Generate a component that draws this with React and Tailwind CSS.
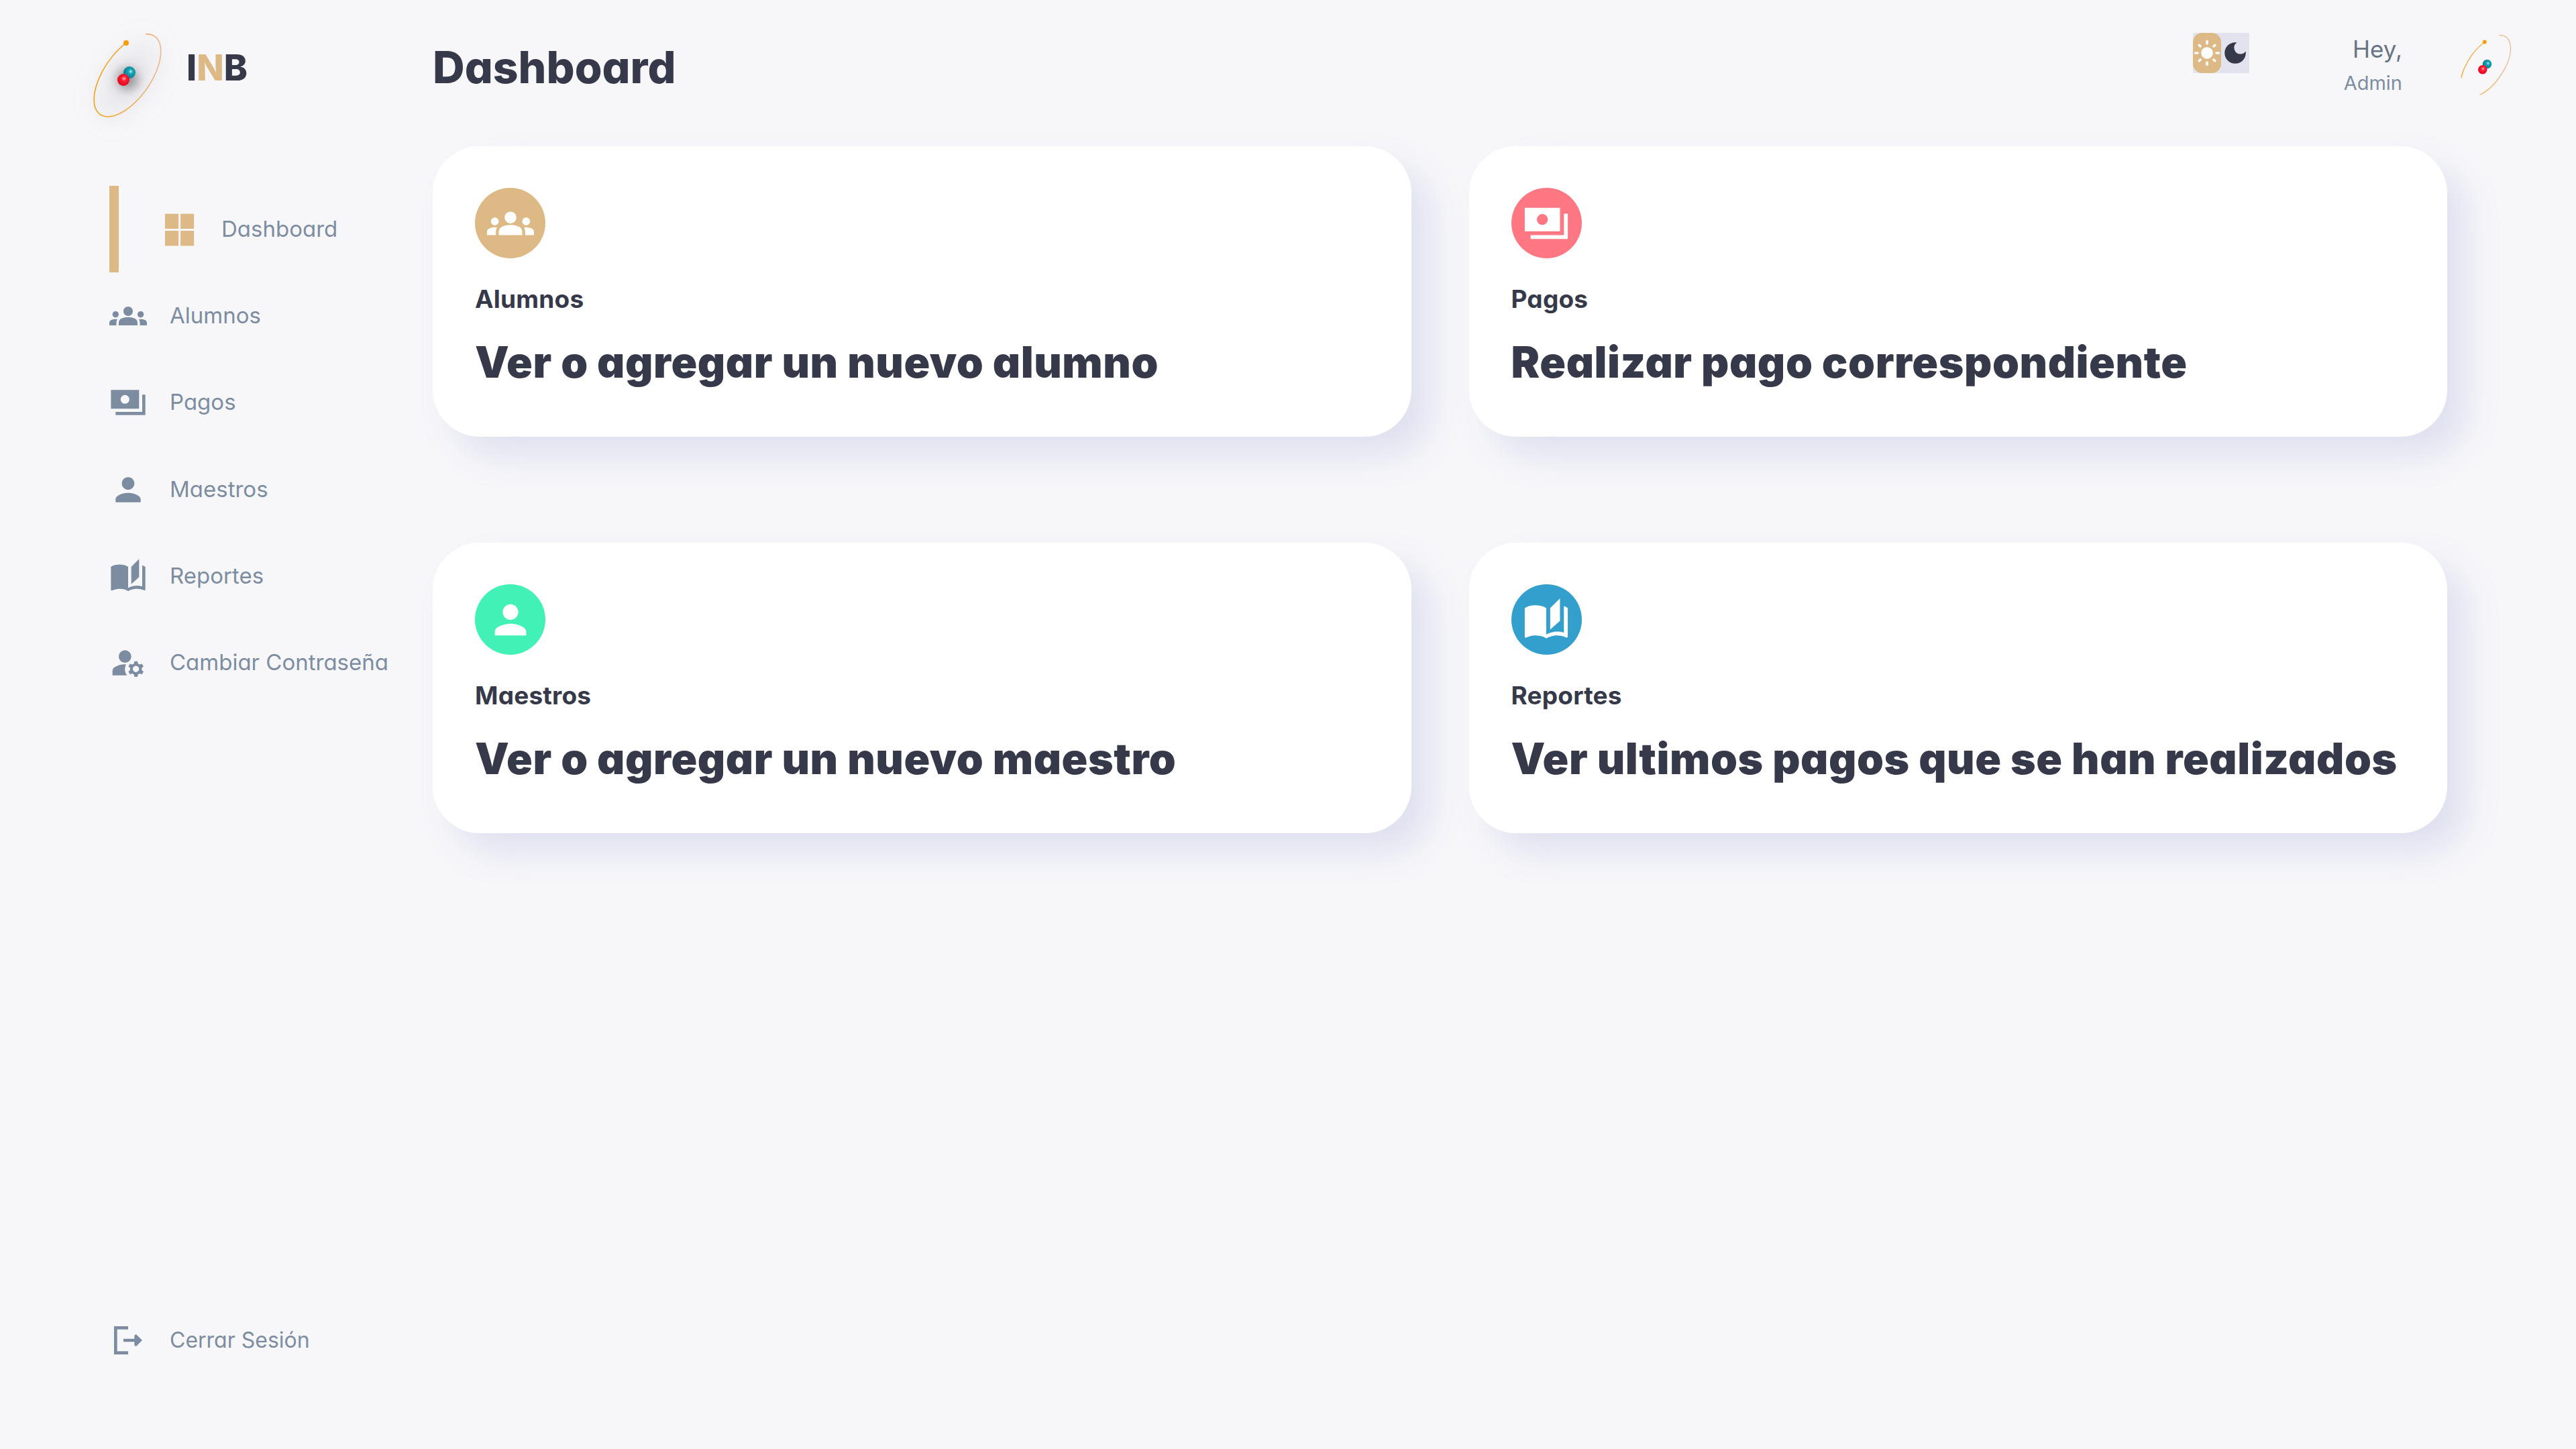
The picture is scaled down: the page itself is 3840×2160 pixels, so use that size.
import React from 'react';
import { MdGroups, MdPerson, MdAutoStories, MdManageAccounts, MdLightMode, MdDarkMode } from 'react-icons/md';

const PaymentsIcon = ({ className }) => (
  <svg viewBox="0 0 24 24" fill="currentColor" className={className}>
    <path d="M23 7v13H4v-2h17V7h2z" />
    <path fillRule="evenodd" d="M1 4h18v12H1zM10 7.2a2.8 2.8 0 1 0 0 5.6 2.8 2.8 0 0 0 0-5.6z" />
  </svg>
);

const WindowIcon = ({ className }) => (
  <svg viewBox="0 0 24 24" fill="currentColor" className={className}>
    <path d="M3 2h8.6v9.6H3zM3 12.9h8.6v9.6H3zM12.9 2h8.6v9.6h-8.6zM12.9 12.9h8.6v9.6h-8.6z" />
  </svg>
);

const LogoutIcon = ({ className }) => (
  <svg viewBox="0 0 24 24" fill="currentColor" className={className}>
    <path d="M17 8l-1 1 0 2H9v2h7l0 2 1 1 4-4zM5 5h7V3H3v18h9v-2H5z" />
  </svg>
);

const Atom = ({ id, halo, className }) => (
  <svg viewBox="0 0 120 140" fill="none" className={className}>
    <defs>
      <radialGradient id={`${id}-teal`} cx="0.6" cy="0.42" r="0.6">
        <stop offset="0" stopColor="#bdf3f5" />
        <stop offset="0.3" stopColor="#1aa5b5" />
        <stop offset="1" stopColor="#067a8c" />
      </radialGradient>
      <radialGradient id={`${id}-red`} cx="0.55" cy="0.4" r="0.6">
        <stop offset="0" stopColor="#ffb0b8" />
        <stop offset="0.35" stopColor="#fb1f33" />
        <stop offset="1" stopColor="#e3001b" />
      </radialGradient>
      <linearGradient id={`${id}-orbit`} x1="0" y1="0" x2="1" y2="0">
        <stop offset="0" stopColor="#f4a316" />
        <stop offset="1" stopColor="#eeb68f" />
      </linearGradient>
      <filter id={`${id}-blur`} x="-80%" y="-80%" width="260%" height="260%">
        <feGaussianBlur stdDeviation="18" />
      </filter>
      <filter id={`${id}-blur2`} x="-150%" y="-150%" width="400%" height="400%">
        <feGaussianBlur stdDeviation="9" />
      </filter>
    </defs>
    {halo && (
      <>
        <ellipse cx="55" cy="78" rx="34" ry="66" transform="rotate(35 55 78)" fill="#a8a8ae" fillOpacity="0.17" filter={`url(#${id}-blur)`} />
        <circle cx="55" cy="76" r="15" fill="#55555c" fillOpacity="0.7" filter={`url(#${id}-blur2)`} />
      </>
    )}
    <path d="M82 9A35 71 35 1 1 53 22" stroke={`url(#${id}-orbit)`} strokeWidth="1.6" />
    <circle cx="53" cy="22" r="4" fill="#f59e0b" />
    <circle cx="58" cy="66" r="9" fill={`url(#${id}-teal)`} />
    <circle cx="49" cy="77" r="9" fill={`url(#${id}-red)`} />
  </svg>
);

const navItems = [
  { label: 'Alumnos', icon: MdGroups },
  { label: 'Pagos', icon: PaymentsIcon },
  { label: 'Maestros', icon: MdPerson },
  { label: 'Reportes', icon: MdAutoStories },
  { label: 'Cambiar Contraseña', icon: MdManageAccounts },
];

const cards = [
  { label: 'Alumnos', title: 'Ver o agregar un nuevo alumno', icon: MdGroups, color: 'bg-[#dcb985]' },
  { label: 'Pagos', title: 'Realizar pago correspondiente', icon: PaymentsIcon, color: 'bg-[#ff7782]' },
  { label: 'Maestros', title: 'Ver o agregar un nuevo maestro', icon: MdPerson, color: 'bg-[#41f1b6]' },
  { label: 'Reportes', title: 'Ver ultimos pagos que se han realizados', icon: MdAutoStories, color: 'bg-[#339fcd]' },
];

const Card = ({ label, title, icon: Icon, color }) => (
  <div className="h-[433px] rounded-[70px] bg-white px-[63px] pt-[62px] shadow-[30px_30px_50px_rgba(132,139,200,0.2)]">
    <div className={`flex h-[105px] w-[105px] items-center justify-center rounded-full text-white ${color}`}>
      <Icon className="h-[70px] w-[70px]" />
    </div>
    <h3 className="mt-[36px] text-[37px] leading-[50px] font-bold tracking-[0.2px]">{label}</h3>
    <h1 className="mt-[24px] text-[64px] leading-[90px] font-black tracking-[0.6px]">{title}</h1>
  </div>
);

const App = () => {
  return (
    <div className="flex h-[2160px] w-[3840px] overflow-hidden bg-[#f7f7fa] font-['Inter',sans-serif] text-[#363949] [font-feature-settings:'cv11']">
      <aside className="flex w-[645px] shrink-0 flex-col">
        <div className="flex h-[277px] items-start pl-[135px] pt-[42px]">
          <Atom id="logo" halo className="h-[140px] w-[120px] shrink-0 overflow-visible" />
          <span className="ml-[23px] mt-[27px] text-[53px] leading-[64px] font-extrabold">
            I<span className="text-[#dcb985]">N</span>B
          </span>
        </div>

        <nav className="flex flex-1 flex-col pl-[163px] text-[33px] text-[#7d8da1]">
          <a className="flex h-[129.3px] items-center">
            <span className="h-full w-[14px] bg-[#dcb985]" />
            <WindowIcon className="ml-[62px] h-[56px] w-[56px] text-[#dcb985]" />
            <span className="ml-[35px]">Dashboard</span>
          </a>
          {navItems.map(({ label, icon: Icon }) => (
            <a key={label} className="flex h-[129.3px] items-center gap-[34px]">
              <Icon className="h-[56px] w-[56px]" />
              <span>{label}</span>
            </a>
          ))}
          <a className="mb-[97px] mt-auto flex h-[129.3px] items-center gap-[34px] text-[32px]">
            <LogoutIcon className="h-[56px] w-[56px]" />
            <span>Cerrar Sesión</span>
          </a>
        </nav>
      </aside>

      <main className="flex-1">
        <header className="flex h-[218px] items-start">
          <h1 className="mt-[64px] text-[66px] leading-[72px] font-extrabold">Dashboard</h1>
          <div className="ml-auto mt-[49px] flex h-[60px] w-[84px] bg-[#e2e3ef]">
            <span className="flex h-full w-[42px] items-center justify-center rounded-[14px] bg-[#dcb985] text-white">
              <MdLightMode className="h-[42px] w-[42px]" />
            </span>
            <span className="flex h-full w-[42px] items-center justify-center">
              <MdDarkMode className="h-[42px] w-[42px]" />
            </span>
          </div>
          <div className="ml-[141px] mt-[51px] text-right">
            <p className="text-[35px] leading-[44px] text-[#677483]">Hey,</p>
            <p className="mt-[11px] text-[29px] leading-[36px] text-[#7d8da1]">Admin</p>
          </div>
          <div className="ml-[83px] mr-[78px] mt-[46px] h-[98px] w-[98px] overflow-hidden rounded-full">
            <Atom id="avatar" className="h-[105px] w-[90px]" />
          </div>
        </header>

        <section className="grid w-[3003px] grid-cols-2 gap-x-[86px] gap-y-[158px]">
          {cards.map((card) => (
            <Card key={card.label} {...card} />
          ))}
        </section>
      </main>
    </div>
  );
};

export default App;
